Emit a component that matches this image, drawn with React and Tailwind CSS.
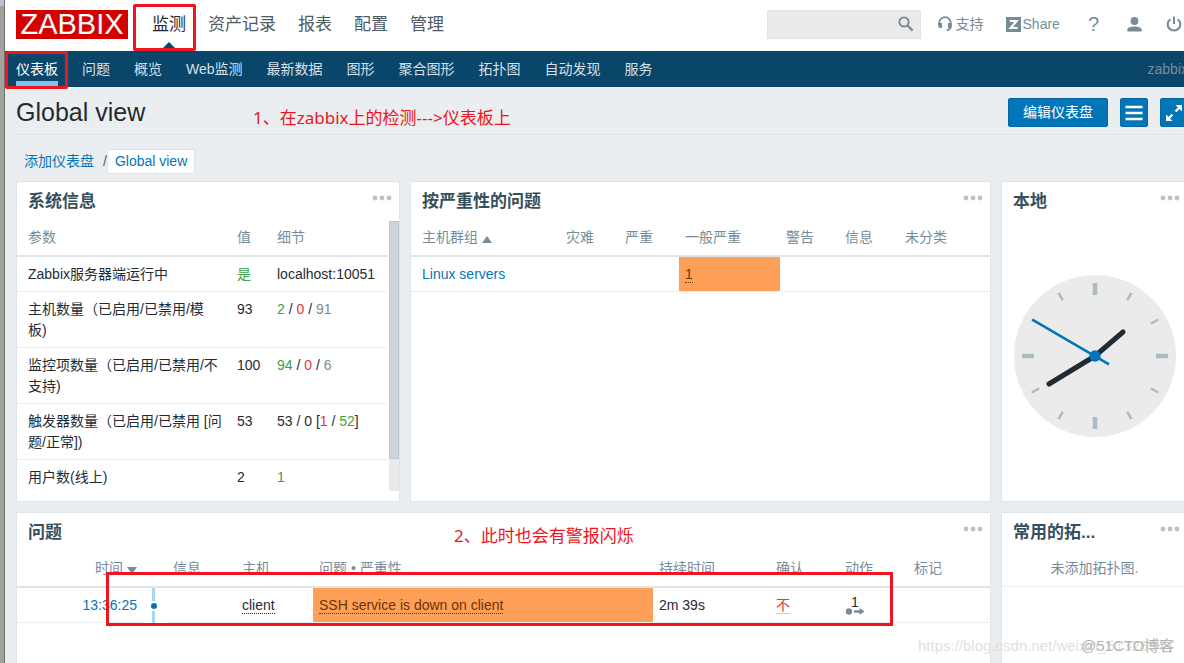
import React from 'react';

const MAIN_MENU = ['监测', '资产记录', '报表', '配置', '管理'];

const SUB_MENU = [
    '仪表板',
    '问题',
    '概览',
    'Web监测',
    '最新数据',
    '图形',
    '聚合图形',
    '拓扑图',
    '自动发现',
    '服务',
];

const SYSTEM_INFO = [
    {
        name: 'Zabbix服务器端运行中',
        value: <span className="text-[#429e47]">是</span>,
        details: 'localhost:10051',
    },
    {
        name: '主机数量（已启用/已禁用/模\n板)',
        value: '93',
        details: (
            <>
                <span className="text-[#429e47]">2</span> / <span className="text-[#e33734]">0</span> /{' '}
                <span className="text-[#768d99]">91</span>
            </>
        ),
    },
    {
        name: '监控项数量（已启用/已禁用/不\n支持)',
        value: '100',
        details: (
            <>
                <span className="text-[#429e47]">94</span> / <span className="text-[#e33734]">0</span> /{' '}
                <span className="text-[#768d99]">6</span>
            </>
        ),
    },
    {
        name: '触发器数量（已启用/已禁用 [问\n题/正常])',
        value: '53',
        details: (
            <>
                53 / 0 [<span className="text-[#e33734]">1</span> / <span className="text-[#429e47]">52</span>]
            </>
        ),
    },
    {
        name: '用户数(线上)',
        value: '2',
        details: <span className="text-[#429e47]">1</span>,
    },
];

const thClass = 'h-9 border-b-2 border-[#dfe4e7] px-1.5 pb-0.5 text-left font-normal whitespace-nowrap text-[#768d99]';
const tdClass = 'border-b border-[#ebeef0] px-1.5 pt-[7px] pb-1.5 align-top';

const SearchIcon = () => (
    <svg width="16" height="16" viewBox="0 0 16 16" fill="none" stroke="#768d99" aria-hidden="true">
        <circle cx="6" cy="6" r="4.6" strokeWidth="2" />
        <path d="M9.5 9.5L14.6 14.6" strokeWidth="2.4" />
    </svg>
);

const HeadsetIcon = () => (
    <svg width="14" height="16" viewBox="0 0 14 16" aria-hidden="true">
        <path d="M1.2 9V7a5.8 5.8 0 0 1 11.6 0v3.2c0 2.4-1.6 3.6-4.2 3.9" fill="none" stroke="#768d99" strokeWidth="1.8" />
        <path d="M.3 7h3.8v5H2.400A2.100 2.100 0 0 1 .3 9.900zM9.900 7h3.800v2.900a2.100 2.100 0 0 1-2.100 2.100H9.900z" fill="#768d99" />
    </svg>
);

const ShareIcon = () => (
    <svg width="15" height="15" viewBox="0 0 15 15" aria-hidden="true">
        <rect width="15" height="15" fill="#768d99" />
        <path d="M3.800 4h6.700L4.700 11h6.800" fill="none" stroke="#fff" strokeWidth="2.200" />
    </svg>
);

const UserIcon = () => (
    <svg width="15" height="15" viewBox="0 0 15 15" fill="#768d99" aria-hidden="true">
        <circle cx="7.5" cy="4" r="3.9" />
        <path d="M.3 14.5v-1.7C.3 10.6 4 9.500 7.500 9.500s7.200 1.100 7.200 3.300v1.700z" />
    </svg>
);

const PowerIcon = () => (
    <svg width="16" height="16" viewBox="0 0 16 16" fill="none" stroke="#768d99" strokeWidth="2" aria-hidden="true">
        <path d="M4.3 3.2a6.300 6.300 0 1 0 7.400 0" />
        <path d="M8 .5v7.5" />
    </svg>
);

const ListIcon = () => (
    <svg width="18" height="16" viewBox="0 0 18 16" stroke="#fff" strokeWidth="2.5" aria-hidden="true">
        <path d="M.5 2h17M.5 8h17M.5 14h17" />
    </svg>
);

const FullscreenIcon = () => (
    <svg width="18" height="18" viewBox="0 0 18 18" aria-hidden="true">
        <path d="M10.500 1H17v6.500zM1 10.500V17h6.500z" fill="#fff" />
        <path d="M10.500 7.500l4-4M7.500 10.500l-4 4" stroke="#fff" strokeWidth="2.400" />
    </svg>
);

const Clock = () => (
    <svg width="162" height="162" viewBox="-81 -81 162 162" role="img" aria-label="本地">
        <circle r="81" fill="#ebebeb" />
        {[0, 30, 60, 90, 120, 150, 180, 210, 240, 270, 300, 330].map((angle) => (
            <line
                key={angle}
                y1="-73"
                y2={angle % 90 === 0 ? -61 : -64.5}
                stroke="#acbbc2"
                strokeWidth={angle % 90 === 0 ? 4.5 : 2.5}
                transform={`rotate(${angle})`}
            />
        ))}
        <g stroke="#1f2c33" strokeWidth="5" strokeLinecap="round">
            <path d="M0 0L28 -24" />
            <path d="M0 0L-46 28" />
        </g>
        <path d="M14 8.3L-62.7 -36.3" stroke="#0275b8" strokeWidth="2.5" />
        <circle r="5.7" fill="#0275b8" />
    </svg>
);

const Widget = ({ title, last = false, className = '', children }) => (
    <section
        className={`flex min-w-0 flex-col border-x border-t border-[#dfe4e7] bg-white ${last ? '' : 'border-b pb-2.5'} ${className}`}
    >
        <header className="flex h-[39px] shrink-0 items-center justify-between pr-[7px] pl-[11px]">
            <h2 className="text-[17px] font-bold text-[#36505d]">{title}</h2>
            <button type="button" aria-label="操作" className="mb-2">
                <svg width="20" height="6" viewBox="0 0 20 6" fill="#b8c3c9" aria-hidden="true">
                    <circle cx="3" cy="3" r="2.4" />
                    <circle cx="10" cy="3" r="2.4" />
                    <circle cx="17" cy="3" r="2.4" />
                </svg>
            </button>
        </header>
        {children}
    </section>
);

const Header = () => (
    <header className="bg-white">
        <div className="-mr-1 flex h-[51px] items-start justify-between pl-[11px]">
            <div className="flex">
                <a
                    href="#home"
                    className="mt-2.5 flex h-[29px] w-28 items-center justify-center bg-[#d40000] text-[29px] leading-none text-white"
                >
                    ZABBIX
                </a>
                <nav className="ml-6 flex gap-[22px]">
                    {MAIN_MENU.map((item, i) => (
                        <a
                            key={item}
                            href={`#${item}`}
                            className={`relative flex h-[51px] items-center pb-0.5 text-[17px] ${i === 0 ? 'text-[#1f2c33]' : 'text-[#4f5b62]'}`}
                        >
                            {item}
                            {i === 0 && (
                                <svg className="absolute bottom-0 left-2.5" width="14" height="9" viewBox="0 0 14 9" aria-hidden="true">
                                    <path d="M7 0l7 7v2H0V7z" fill="#0a466a" />
                                </svg>
                            )}
                        </a>
                    ))}
                </nav>
            </div>
            <div className="flex h-12 items-center text-[#768d99]">
                <form className="flex h-[29px] w-[154px] items-center border border-[#e3e3e3] bg-[#ebebeb] pr-1.5">
                    <input type="text" aria-label="搜索" className="min-w-0 flex-1 bg-transparent px-1 outline-none" />
                    <button type="button" aria-label="搜索">
                        <SearchIcon />
                    </button>
                </form>
                <a href="#support" className="ml-[17px] flex items-center gap-1">
                    <HeadsetIcon />
                    支持
                </a>
                <a href="#share" className="ml-[22px] flex items-center gap-0.5">
                    <ShareIcon />
                    Share
                </a>
                <a href="#help" className="ml-7 text-[20px]" aria-label="帮助">
                    ?
                </a>
                <a href="#profile" className="ml-7" aria-label="用户">
                    <UserIcon />
                </a>
                <a href="#logout" className="mr-1.5 ml-6" aria-label="退出">
                    <PowerIcon />
                </a>
            </div>
        </div>
        <div className="bg-[#0a466a]">
            <div className="-mr-1 flex h-9 justify-between pl-[11px]">
                <nav className="flex gap-6">
                    {SUB_MENU.map((item, i) => (
                        <a
                            key={item}
                            href={`#${item}`}
                            className={`flex items-center whitespace-nowrap ${i === 0 ? 'mb-px border-b-[5px] border-[#7cc2f2] pt-1.5 text-white' : 'text-[#d5e0e8]'}`}
                        >
                            {item}
                        </a>
                    ))}
                </nav>
                <span className="self-center text-[#768d99]">zabbix</span>
            </div>
        </div>
    </header>
);

const SystemInfo = () => (
    <div className="flex min-h-0 flex-1">
        <table className="mr-px flex-1 table-fixed self-start border-separate border-spacing-0">
            <colgroup>
                <col className="w-[214px]" />
                <col className="w-10" />
                <col />
            </colgroup>
            <thead>
                <tr>
                    <th className={`${thClass} pl-[11px]`}>参数</th>
                    <th className={thClass}>值</th>
                    <th className={thClass}>细节</th>
                </tr>
            </thead>
            <tbody>
                {SYSTEM_INFO.map((row, i) => (
                    <tr key={row.name} className={i === SYSTEM_INFO.length - 1 ? '*:border-b-0' : ''}>
                        <td className={`${tdClass} pl-[11px] whitespace-pre`}>{row.name}</td>
                        <td className={tdClass}>{row.value}</td>
                        <td className={`${tdClass} whitespace-nowrap`}>{row.details}</td>
                    </tr>
                ))}
            </tbody>
        </table>
        <div className="w-2.5 bg-[#e9e9e9]">
            <div className="h-[88%] border border-[#bcc8ce] bg-[#ccd5d9]" />
        </div>
    </div>
);

const SeverityProblems = () => (
    <table className="w-full table-fixed border-separate border-spacing-0">
        <colgroup>
            <col />
            <col className="w-[59px]" />
            <col className="w-[60px]" />
            <col className="w-[101px]" />
            <col className="w-[59px]" />
            <col className="w-[60px]" />
            <col className="w-[91px]" />
        </colgroup>
        <thead>
            <tr>
                <th className={`${thClass} pl-[11px]`}>
                    <a href="#sort" className="flex items-center gap-1">
                        主机群组
                        <svg className="mt-1" width="10" height="7" viewBox="0 0 10 7" fill="#768d99" aria-hidden="true">
                            <path d="M5 0l5 7H0z" />
                        </svg>
                    </a>
                </th>
                <th className={thClass}>灾难</th>
                <th className={thClass}>严重</th>
                <th className={thClass}>一般严重</th>
                <th className={thClass}>警告</th>
                <th className={thClass}>信息</th>
                <th className={thClass}>未分类</th>
            </tr>
        </thead>
        <tbody>
            <tr>
                <td className={`${tdClass} pl-[11px]`}>
                    <a href="#linux" className="text-[#0275b8]">
                        Linux servers
                    </a>
                </td>
                <td className={tdClass} />
                <td className={tdClass} />
                <td className={`${tdClass} bg-[#ffa059]`}>
                    <button type="button" className="border-b border-dotted border-[#733100] leading-4 text-[#733100]">
                        1
                    </button>
                </td>
                <td className={tdClass} />
                <td className={tdClass} />
                <td className={tdClass} />
            </tr>
        </tbody>
    </table>
);

const Problems = () => (
    <table className="w-full table-fixed border-separate border-spacing-0">
        <colgroup>
            <col className="w-[126px]" />
            <col className="w-6" />
            <col className="w-[69px]" />
            <col className="w-[77px]" />
            <col />
            <col className="w-[117px]" />
            <col className="w-[69px]" />
            <col className="w-[69px]" />
            <col className="w-[82px]" />
        </colgroup>
        <thead>
            <tr>
                <th className={thClass}>
                    <a href="#sort" className="flex items-center justify-end gap-1">
                        时间
                        <svg className="mt-1" width="10" height="7" viewBox="0 0 10 7" fill="#768d99" aria-hidden="true">
                            <path d="M0 0h10L5 7z" />
                        </svg>
                    </a>
                </th>
                <th className={thClass} />
                <th className={thClass}>信息</th>
                <th className={thClass}>主机</th>
                <th className={thClass}>问题 • 严重性</th>
                <th className={thClass}>持续时间</th>
                <th className={thClass}>确认</th>
                <th className={thClass}>动作</th>
                <th className={thClass}>标记</th>
            </tr>
        </thead>
        <tbody>
            <tr>
                <td className={`${tdClass} text-right`}>
                    <a href="#event" className="text-[#0275b8]">
                        13:36:25
                    </a>
                </td>
                <td className="pl-[9px]">
                    <div className="flex h-[35px] w-[3px] items-center justify-center bg-[#a8d5f0]">
                        <span className="size-2.5 shrink-0 rounded-full border-2 border-white bg-[#0275b8]" />
                    </div>
                </td>
                <td className={tdClass} />
                <td className={tdClass}>
                    <button type="button" className="border-b border-dotted border-[#1f2c33] leading-4">
                        client
                    </button>
                </td>
                <td className={`${tdClass} bg-[#ffa059]`}>
                    <button type="button" className="border-b border-dotted border-[#733100] leading-4 text-[#733100]">
                        SSH service is down on client
                    </button>
                </td>
                <td className={tdClass}>2m 39s</td>
                <td className={tdClass}>
                    <a href="#ack" className="inline-block border-b border-[#c0cbd1] leading-4 text-[#e33734]">
                        不
                    </a>
                </td>
                <td className="border-b border-[#ebeef0] px-1.5 align-middle">
                    <button type="button" className="flex w-5 flex-col items-center leading-3">
                        1
                        <svg width="20" height="7" viewBox="0 0 20 7" fill="#768d99" aria-hidden="true">
                            <circle cx="4" cy="3.5" r="3.2" />
                            <path d="M9 2.300h5.500V0L19.500 3.500 14.500 7V4.700H9z" />
                        </svg>
                    </button>
                </td>
                <td className={tdClass} />
            </tr>
        </tbody>
    </table>
);

const blueButton = 'flex h-[29px] items-center justify-center rounded-xs border border-[#0268a4] bg-[#0275b8] text-white';

const App = () => (
    <div className="relative flex min-h-screen overflow-hidden bg-[#ebeef0] font-['Liberation_Sans','Noto_Sans_CJK_SC',sans-serif] text-[14px] leading-[21px] text-[#1f2c33]">
        <div className="w-[5px] shrink-0 border-r border-[#6f6f6c] bg-[#a3a39d]">
            <div className="h-1.5 bg-[#b5c3d8]" />
        </div>
        <div className="flex min-w-0 flex-1 flex-col">
            <Header />
            <main className="-mr-1 flex flex-1 flex-col pl-[11px]">
                <div className="flex h-12 items-center justify-between border-b border-[#dfe4e7] pt-1">
                    <h1 className="text-[25px]">Global view</h1>
                    <div className="flex gap-3">
                        <button type="button" className={`${blueButton} px-3.5`}>
                            编辑仪表盘
                        </button>
                        <button type="button" aria-label="菜单" className={`${blueButton} w-7`}>
                            <ListIcon />
                        </button>
                        <button type="button" aria-label="全屏" className={`${blueButton} w-7`}>
                            <FullscreenIcon />
                        </button>
                    </div>
                </div>
                <nav className="mt-3.5 flex items-center pl-2 text-[#0275b8]">
                    <a href="#dashboards">添加仪表盘</a>
                    <span className="ml-[9px] text-[#4f5b62]">/</span>
                    <a href="#global" className="border border-[#dfe4e7] bg-white px-[7px] py-px">
                        Global view
                    </a>
                </nav>
                <div className="mt-[7px] grid flex-1 grid-cols-12 grid-rows-[321px_1fr] gap-2.5">
                    <Widget title="系统信息" className="col-span-4">
                        <SystemInfo />
                    </Widget>
                    <Widget title="按严重性的问题" className="col-span-6">
                        <SeverityProblems />
                    </Widget>
                    <Widget title="本地" className="col-span-2">
                        <div className="flex flex-1 items-center justify-center">
                            <Clock />
                        </div>
                    </Widget>
                    <Widget title="问题" last className="col-span-10">
                        <Problems />
                    </Widget>
                    <Widget title="常用的拓..." last className="col-span-2">
                        <p className="border-b border-[#ebeef0] pt-1.5 pb-[7px] text-center text-[#768d99]">未添加拓扑图.</p>
                    </Widget>
                </div>
            </main>
        </div>

        {/* callouts drawn over the page */}
        <div className="pointer-events-none absolute top-1 left-[133px] h-[47px] w-[63px] rounded-xs border-[3px] border-[#ee1520]" />
        <div className="pointer-events-none absolute top-[51px] left-[5px] h-[38px] w-[63px] rounded-xs border-[3px] border-[#ee1520]" />
        <div className="pointer-events-none absolute top-[572px] left-[106px] h-[54px] w-[787px] border-[3px] border-[#ee1520]" />
        <p className="absolute top-[107px] left-[253px] font-['Noto_Sans','Noto_Sans_CJK_SC',sans-serif] text-[17px] text-[#ee1520]">
            1、在zabbix上的检测---&gt;仪表板上
        </p>
        <p className="absolute top-[525px] left-[454px] font-['Noto_Sans','Noto_Sans_CJK_SC',sans-serif] text-[17px] text-[#ee1520]">
            2、此时也会有警报闪烁
        </p>
        <p className="absolute top-[635px] left-[918px] text-[15px] text-[#dfdfdf]">https://blog.csdn.net/weixin_51326944</p>
        <p className="absolute top-[635px] left-[1081px] text-[15px] text-[#b4b4b4]">@51CTO博客</p>
    </div>
);

export default App;
